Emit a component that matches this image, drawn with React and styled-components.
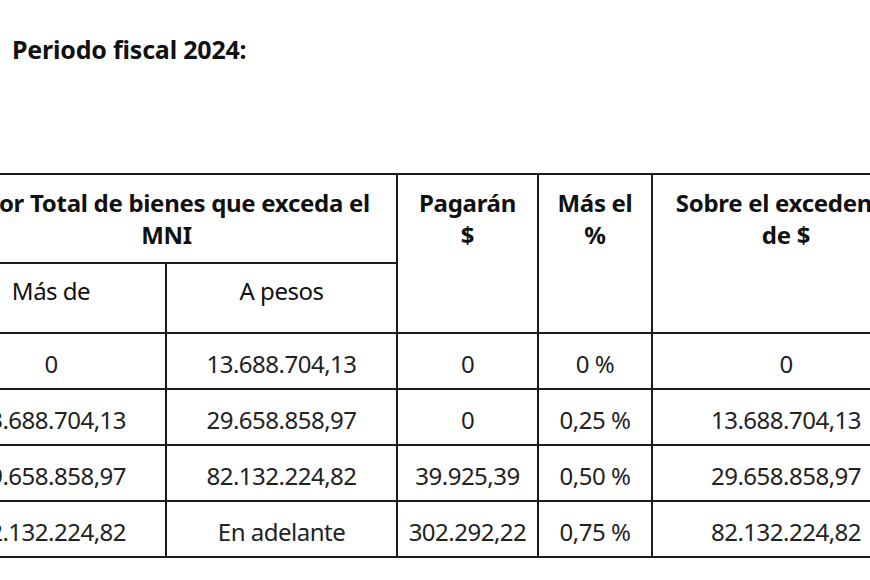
import React from 'react';
import styled, { createGlobalStyle } from 'styled-components';

const GlobalStyle = createGlobalStyle`
  html, body {
    margin: 0;
    padding: 0;
    background: #fff;
    overflow: hidden;
  }
  body {
    font-family: "Noto Sans", "Open Sans", sans-serif;
    color: #1a1a1a;
  }
`;

const Page = styled.div`
  width: 870px;
  height: 580px;
  overflow: hidden;
  padding-top: 34px;
  box-sizing: border-box;
`;

const Title = styled.h2`
  margin: 0 0 0 12px;
  font-size: 25px;
  font-weight: 700;
  letter-spacing: -0.2px;
  line-height: 30px;
  color: #111;
`;

const TableViewport = styled.div`
  margin-top: 109px;
  overflow: hidden;
`;

const Table = styled.table`
  margin-left: -65px;
  width: 984px;
  table-layout: fixed;
  border-collapse: collapse;
`;

const HeadCell = styled.th`
  border: 2px solid #1c1c1c;
  font-weight: ${p => (p.$light ? 400 : 700)};
  font-size: 24px;
  letter-spacing: ${p => (p.$light ? '-0.5px' : '-0.3px')};
  line-height: 32px;
  text-align: center;
  vertical-align: top;
  padding: ${p => (p.$light ? '11px 6px 0' : '12px 6px 0')};
  height: ${p => p.$h}px;
  box-sizing: border-box;
  color: #111;
`;

const Cell = styled.td`
  border: 2px solid #1c1c1c;
  font-size: 24px;
  font-weight: 400;
  letter-spacing: -0.5px;
  line-height: 32px;
  text-align: center;
  vertical-align: middle;
  height: 56px;
  padding: 5px 2px 0;
  box-sizing: border-box;
  color: #222;
  white-space: nowrap;
`;

const rows = [
  ['0', '13.688.704,13', '0', '0 %', '0'],
  ['13.688.704,13', '29.658.858,97', '0', '0,25 %', '13.688.704,13'],
  ['29.658.858,97', '82.132.224,82', '39.925,39', '0,50 %', '29.658.858,97'],
  ['82.132.224,82', 'En adelante', '302.292,22', '0,75 %', '82.132.224,82'],
];

const widths = [230, 231, 141, 114, 268];

export default function App() {
  return (
    <Page>
      <GlobalStyle />
      <Title>Periodo fiscal 2024:</Title>
      <TableViewport>
        <Table>
          <colgroup>
            {widths.map((w, i) => (
              <col key={i} style={{ width: w }} />
            ))}
          </colgroup>
          <thead>
            <tr>
              <HeadCell colSpan={2} $h={89}>
                Valor Total de bienes que exceda el<br />MNI
              </HeadCell>
              <HeadCell rowSpan={2}>Pagarán<br />$</HeadCell>
              <HeadCell rowSpan={2}>Más el<br />%</HeadCell>
              <HeadCell rowSpan={2}>Sobre el excedente<br />de $</HeadCell>
            </tr>
            <tr>
              <HeadCell $light $h={70}>Más de</HeadCell>
              <HeadCell $light $h={70}>A pesos</HeadCell>
            </tr>
          </thead>
          <tbody>
            {rows.map((r, i) => (
              <tr key={i}>
                {r.map((v, j) => (
                  <Cell key={j}>{v}</Cell>
                ))}
              </tr>
            ))}
          </tbody>
        </Table>
      </TableViewport>
    </Page>
  );
}
